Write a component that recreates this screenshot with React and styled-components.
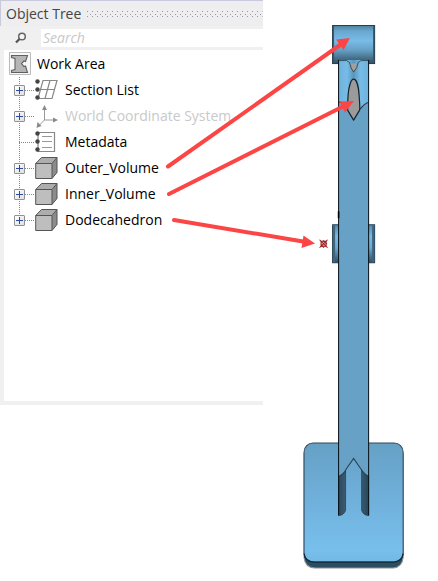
import React from "react";
import styled, { createGlobalStyle } from "styled-components";

const GlobalStyle = createGlobalStyle`
  * { box-sizing: border-box; }
  body { margin: 0; background: #fff; font-family: "Open Sans", "Noto Sans", sans-serif; }
`;

const Workspace = styled.main`
  position: relative;
  display: grid;
  grid-template-columns: 3fr 2fr;
  align-items: start;
`;

const Panel = styled.section`
  display: flex;
  flex-direction: column;
  min-width: 0;
  padding-bottom: 4px;
  background: #f0f0f0;
`;

const TitleBar = styled.header`
  display: flex;
  align-items: center;
  gap: 6px;
  height: 26px;
  padding-left: 5px;
  border-top: 1px solid #c8c9dc;
  border-left: 1px solid #c8c9dc;
  background: #eeeef0;
`;

const Title = styled.h1`
  margin: 0;
  color: #444;
  font-size: 14px;
  font-weight: 400;
  line-height: 20px;
  white-space: nowrap;
`;

const Grip = styled.svg`
  flex: 1;
  min-width: 0;
  height: 7px;
`;

const SearchRow = styled.label`
  display: grid;
  grid-template-columns: 41px 1fr;
  align-items: center;
  padding: 3px 0;
`;

const SearchIcon = styled.svg`
  width: 12px;
  height: 12px;
  justify-self: end;
  margin-right: 14px;
`;

const SearchInput = styled.input`
  width: 100%;
  min-width: 0;
  height: 18px;
  padding: 0 2px;
  border: 0;
  outline: 0;
  background: #fff;
  font: italic 14px/18px "Open Sans", sans-serif;
  &::placeholder { color: #c8c8c8; opacity: 1; }
`;

const Tree = styled.ul`
  min-height: 351px;
  margin: 0 0 0 4px;
  padding: 1px 0 0 5px;
  background: #fff;
  list-style: none;
`;

const Branch = styled.ul`
  margin: 0;
  padding: 0;
  list-style: none;
`;

const Row = styled.div`
  display: flex;
  align-items: center;
  height: 26px;
`;

const Label = styled.span`
  color: ${({ $muted }) => ($muted ? "#c9c9c9" : "#000")};
  font-size: 14px;
  line-height: 20px;
  white-space: nowrap;
  margin-left: 6px;
`;

const RootIcon = styled.svg`
  width: 22px;
  height: 24px;
  flex: none;
`;

const NodeIcon = styled.svg`
  width: 24px;
  height: 24px;
  flex: none;
`;

const Guide = styled.span`
  display: grid;
  grid-template-columns: 5px 11px 1fr;
  align-items: center;
  width: 26px;
  height: 26px;
  flex: none;
  background:
    repeating-linear-gradient(#888 0 1px, transparent 1px 2px) 10px 0 / 1px ${({ $last }) => ($last ? "13px" : "26px")} no-repeat,
    repeating-linear-gradient(90deg, #888 0 1px, transparent 1px 2px) 10px 13px / 16px 1px no-repeat;
`;

const Expander = styled.button`
  grid-column: 2;
  width: 11px;
  height: 11px;
  padding: 0;
  border: 1px solid #929292;
  border-radius: 1px;
  background:
    linear-gradient(#2b4ba0, #2b4ba0) center / 7px 1px no-repeat,
    linear-gradient(#2b4ba0, #2b4ba0) center / 1px 7px no-repeat,
    linear-gradient(135deg, #fff, #dedede);
`;

const Viewport = styled.svg`
  display: block;
  width: 100%;
`;

const Callouts = styled.svg`
  position: absolute;
  top: 0;
  left: 0;
  width: 100%;
  pointer-events: none;
`;

const Dots = () => (
  <>
    <circle cx="2.5" cy="3.5" r="2.2" fill="#444" />
    <circle cx="2.5" cy="11.5" r="2.2" fill="#444" />
    <circle cx="2.5" cy="19.5" r="2.2" fill="#444" />
  </>
);

const glyphs = {
  section: (
    <>
      <path d="M8 2.5h14l-5 18H3zM15 2.5l-5 18M5.5 11.5h14" fill="#fff" stroke="#888" strokeWidth="1.2" />
      <Dots />
    </>
  ),
  axes: (
    <>
      <path d="M9.5 4v12H20M9.5 16l-6 6" fill="none" stroke="#999" />
      <path d="M7 6l2.5-5L12 6zM18 13.5l5 2.5-5 2.5zM1.5 24l1-6 4 4z" fill="#8a8a8a" />
    </>
  ),
  metadata: (
    <>
      <path d="M3 2.5h16.5v19H3z" fill="#fff" stroke="#888" strokeWidth="1.2" />
      <path d="M7 6.5h10M7 11.5h10M7 17.5h10" stroke="#999" />
      <Dots />
    </>
  ),
  cube: (
    <>
      <path d="M.7 7.5L6.5 1.5H22l-5 6z" fill="#adadad" />
      <path d="M17 7.5l5-6v15l-5 6z" fill="#8c8c8c" />
      <path d="M.7 7.5H17v15H.7z" fill="#bebebe" />
      <path d="M.7 7.5L6.5 1.5H22v15l-5 6H.7V7.5H17v15M17 7.5l5-6" fill="none" stroke="#555" strokeLinejoin="round" />
    </>
  ),
};

const nodes = [
  { name: "Section List", icon: "section", expandable: true },
  { name: "World Coordinate System", icon: "axes", expandable: true, muted: true },
  { name: "Metadata", icon: "metadata" },
  { name: "Outer_Volume", icon: "cube", expandable: true },
  { name: "Inner_Volume", icon: "cube", expandable: true },
  { name: "Dodecahedron", icon: "cube", expandable: true },
];

const TreeNode = ({ node, last }) => (
  <li>
    <Row>
      <Guide $last={last}>
        {node.expandable && <Expander type="button" aria-expanded="false" aria-label={`Expand ${node.name}`} />}
      </Guide>
      <NodeIcon viewBox="0 0 24 24" aria-hidden="true">{glyphs[node.icon]}</NodeIcon>
      <Label $muted={node.muted}>{node.name}</Label>
    </Row>
  </li>
);

const ObjectTree = () => (
  <Panel>
    <TitleBar>
      <Title>Object Tree</Title>
      <Grip aria-hidden="true">
        <defs>
          <pattern id="grip" width="5" height="7" patternUnits="userSpaceOnUse">
            <path d="M0 1h1v1H0zM3 4h1v1H3zM0 6h1v1H0z" fill="#999" />
          </pattern>
        </defs>
        <rect width="100%" height="7" fill="url(#grip)" />
      </Grip>
    </TitleBar>
    <SearchRow>
      <SearchIcon viewBox="0 0 12 12" aria-hidden="true">
        <circle cx="7" cy="4.5" r="3.3" fill="#f4f4f4" stroke="#666" strokeWidth="1.5" />
        <path d="M4.5 7L1 10.5" stroke="#555" strokeWidth="2.3" />
      </SearchIcon>
      <SearchInput type="text" aria-label="Search objects" placeholder="Search" />
    </SearchRow>
    <Tree>
      <li>
        <Row>
          <RootIcon viewBox="0 0 22 24" aria-hidden="true">
            <path d="M.5 .5h21v22H.5z" fill="#f7f7f7" stroke="#bbb" />
            <path d="M2.500 3.500h16l-2 6-1.500-.5-2.500 2.500 2.500 3 1.500-.5 2 6.500h-16v-2l3.500-1V6.500l-3.500-1z" fill="#b5b5b5" stroke="#606060" strokeWidth="1.1" />
          </RootIcon>
          <Label>Work Area</Label>
        </Row>
        <Branch>
          {nodes.map((node, i) => (
            <TreeNode key={node.name} node={node} last={i === nodes.length - 1} />
          ))}
        </Branch>
      </li>
    </Tree>
  </Panel>
);

const Gradient = ({ id, stops, across }) => (
  <linearGradient id={id} x1="0" y1="0" x2={across ? "1" : "0"} y2={across ? "0" : "1"}>
    {stops.map(([offset, color]) => <stop key={offset} offset={offset} stopColor={color} />)}
  </linearGradient>
);

const Model = () => (
  <Viewport viewBox="263 0 175 580" role="img" aria-label="Blue support arm with base plate">
    <defs>
      <Gradient id="roll" stops={[[0, "#4f819f"], [0.15, "#69a8cf"], [0.4, "#78bce8"], [0.65, "#669fc4"], [1, "#304f63"]]} />
      <Gradient id="boss" stops={[[0, "#538aad"], [0.3, "#77bbe6"], [0.6, "#6babd3"], [1, "#304d60"]]} />
      <Gradient id="plate" stops={[[0, "#66a0c5"], [0.5, "#70b1dc"], [0.9, "#78bfed"], [1, "#74b8e3"]]} />
      <Gradient id="fork" across stops={[[0, "#6eb2dc"], [0.28, "#77bce7"], [0.5, "#5c95b9"], [0.72, "#77bce7"], [1, "#6eb2dc"]]} />
      <Gradient id="slot" across stops={[[0, "#2c495b"], [0.5, "#48718c"], [1, "#294558"]]} />
    </defs>
    <path d="M304 453v104q1 10 11 10.5h78q9-1 10-10.5V453z" fill="#2d4d61" stroke="#8c9498" />
    <rect x="304" y="442.5" width="99" height="119" rx="9" fill="url(#plate)" stroke="#304858" />
    <path d="M304 553q1 8 10 8.5h80q8-1 9-8.5" fill="none" stroke="#122b38" strokeWidth="1.3" />
    <rect x="332.5" y="25.5" width="42" height="38" fill="url(#roll)" stroke="#263c48" />
    <path d="M333.5 26v37M373.5 26v37" stroke="#36566a" />
    <path d="M332.5 224.5h42v38h-42z" fill="url(#boss)" stroke="#294252" />
    <path d="M334 225v37M373 225v37" stroke="#3f657d" strokeWidth="2" />
    <path d="M338.5 475q4-1 7-6v41q-2 5-7 5zM368.5 475q-4-1-7-6v41q2 5 7 5z" fill="url(#slot)" stroke="#263b48" strokeWidth=".7" />
    <path d="M338.5 60v416q5-2 8-8l7-10 7 10q4 6 8 8V60z" fill="#67a1c6" />
    <path d="M338.5 476q5-2 8-8l7-10 7 10q4 6 8 8" fill="none" stroke="#243f50" />
    <path d="M338.5 60h30v42q-5 3-8 6l-7 11-7-11q-3-5-8-6z" fill="url(#fork)" />
    <path d="M349.5 63.5h8.500q0 4-4.500 8.500q-4-4-4-8.500z" fill="#a0a0a0" />
    <path d="M338.5 60.5h8l3 2q1 6 4 9.500 4-4 4.500-9.500l3-2h7.500" fill="none" stroke="#263a45" strokeWidth=".8" />
    <path d="M338.500 102q3 0 4 2M368.5 102q-5 2-8.5 7" fill="none" stroke="#263a45" />
    <path d="M353.5 79c3 0 5 8 5.500 16s1 12 .5 15l-6 10-6-10c0-3 0-8 .5-15s2.500-16 5.500-16z" fill="#9b9b9b" stroke="#17242c" strokeWidth="1.2" strokeLinejoin="round" />
    <path d="M338.5 60v455M368.5 60v455" stroke="#071016" />
    <path d="M338.5 211v7" stroke="#000" strokeWidth="1.6" />
    <path d="M321 241h5v5h-5z" fill="#e5b5b0" stroke="#941a1a" />
    <path d="M319.500 239.500l8 8M327.500 239.500l-8 8M321 244.500l3 3M323 240l4 4" fill="none" stroke="#941a1a" />
  </Viewport>
);

const Arrows = () => (
  <Callouts viewBox="0 0 438 580" aria-hidden="true">
    <g stroke="#fc4545" strokeWidth="4" strokeLinecap="round">
      <path d="M168 166.5L340 45" />
      <path d="M169 194L342 107" />
      <path d="M174 220L303 241.5" />
    </g>
    <path d="M350 38l-14 1.500 7.500 10.500zM354 101l-14.500 .5 5.500 11zM315 243.500l-11.500-8-2 12.500z" fill="#fc4545" />
  </Callouts>
);

export default function App() {
  return (
    <>
      <GlobalStyle />
      <Workspace>
        <ObjectTree />
        <Model />
        <Arrows />
      </Workspace>
    </>
  );
}
